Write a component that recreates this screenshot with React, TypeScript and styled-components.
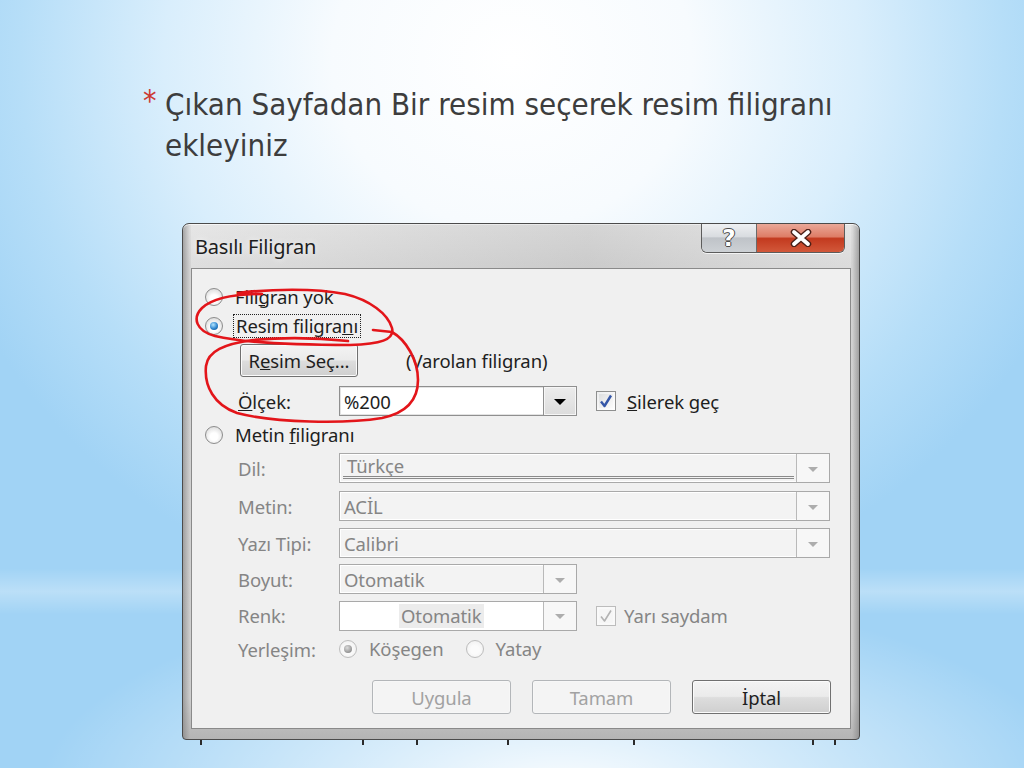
import styled, { createGlobalStyle } from 'styled-components';

const GlobalStyle = createGlobalStyle`
  html, body {
    margin: 0;
    padding: 0;
  }
  body {
    font-family: 'Noto Sans', 'Open Sans', sans-serif;
  }
  #root {
    width: 1024px;
    height: 768px;
  }
`;

const tickOffsets = [18, 160, 52, 89, 124, 177, 20];

const CloseGlyph = () => (
  <svg width="26" height="18" viewBox="0 0 26 18">
    <path d="M6 3 L20 15 M20 3 L6 15" stroke="#4a1f17" strokeWidth="6.5" strokeLinecap="round" fill="none" />
    <path d="M6 3 L20 15 M20 3 L6 15" stroke="#ffffff" strokeWidth="3.8" strokeLinecap="round" fill="none" />
  </svg>
);

const Check = ({ disabled }: { disabled?: boolean }) => (
  <svg width="16" height="16" viewBox="0 0 16 16">
    <path
      d="M3 8.5 L6.5 13 L13 2.5"
      stroke={disabled ? '#b3b3b3' : '#3557a8'}
      strokeWidth={disabled ? 1.6 : 2.4}
      fill="none"
      strokeLinejoin="round"
    />
  </svg>
);

const App = () => {
  return (
    <>
      <GlobalStyle />
      <Slide>
        <Heading>
          <Star>*</Star>
          <HeadingText>Çıkan Sayfadan Bir resim seçerek resim filigranı ekleyiniz</HeadingText>
        </Heading>

        <Dialog>
          <Window>
            <TitleBar>
              <Caption>Basılı Filigran</Caption>
              <CaptionButtons>
                <HelpButton>?</HelpButton>
                <CloseButton>
                  <CloseGlyph />
                </CloseButton>
              </CaptionButtons>
            </TitleBar>

            <Client>
              <Row $h={29}>
                <Radio />
                <OptionLabel>
                  Fili<u>g</u>ran yok
                </OptionLabel>
              </Row>
              <Row $h={29}>
                <Radio $checked />
                <OptionLabel $focused>
                  Resim filigra<u>n</u>ı
                </OptionLabel>
              </Row>
              <Row $h={41} $indent={35}>
                <PushButton $w={118} $h={33}>
                  R<u>e</u>sim Seç...
                </PushButton>
                <Note>(Varolan filigran)</Note>
              </Row>
              <Row $h={40} $indent={33}>
                <FieldLabel>
                  <u>Ö</u>lçek:
                </FieldLabel>
                <Combo $w={238} $enabled $white>
                  <ComboValue>%200</ComboValue>
                  <ComboButton $enabled>
                    <Arrow $enabled />
                  </ComboButton>
                </Combo>
                <CheckBox $gap={19}>
                  <Check />
                </CheckBox>
                <CheckLabel>
                  <u>S</u>ilerek geç
                </CheckLabel>
              </Row>
              <Row $h={28}>
                <Radio />
                <OptionLabel>
                  Metin <u>f</u>iligranı
                </OptionLabel>
              </Row>
              <Row $h={38} $indent={33}>
                <FieldLabel $disabled>Dil:</FieldLabel>
                <Combo $w={491}>
                  <ComboValue $disabled $ruled>
                    Türkçe
                  </ComboValue>
                  <ComboButton>
                    <Arrow />
                  </ComboButton>
                </Combo>
              </Row>
              <Row $h={38} $indent={33}>
                <FieldLabel $disabled>Metin:</FieldLabel>
                <Combo $w={491}>
                  <ComboValue $disabled>ACİL</ComboValue>
                  <ComboButton>
                    <Arrow />
                  </ComboButton>
                </Combo>
              </Row>
              <Row $h={36} $indent={33}>
                <FieldLabel $disabled>Yazı Tipi:</FieldLabel>
                <Combo $w={491}>
                  <ComboValue $disabled>Calibri</ComboValue>
                  <ComboButton>
                    <Arrow />
                  </ComboButton>
                </Combo>
              </Row>
              <Row $h={36} $indent={33}>
                <FieldLabel $disabled>Boyut:</FieldLabel>
                <Combo $w={238}>
                  <ComboValue $disabled>Otomatik</ComboValue>
                  <ComboButton>
                    <Arrow />
                  </ComboButton>
                </Combo>
              </Row>
              <Row $h={37} $indent={33}>
                <FieldLabel $disabled>Renk:</FieldLabel>
                <Combo $w={238} $white>
                  <ComboValue $disabled>
                    <Swatch>Otomatik</Swatch>
                  </ComboValue>
                  <ComboButton>
                    <Arrow />
                  </ComboButton>
                </Combo>
                <CheckBox $gap={19} $disabled>
                  <Check disabled />
                </CheckBox>
                <CheckLabel $disabled>Yarı saydam</CheckLabel>
              </Row>
              <Row $h={30} $indent={33}>
                <FieldLabel $disabled>Yerleşim:</FieldLabel>
                <Radio $checked $disabled />
                <OptionLabel $disabled>Köşegen</OptionLabel>
                <Radio $disabled $gap={22} />
                <OptionLabel $disabled>Yatay</OptionLabel>
              </Row>
              <ButtonBar>
                <PushButton $w={139} $h={34} $disabled>
                  Uygula
                </PushButton>
                <PushButton $w={139} $h={34} $disabled>
                  Tamam
                </PushButton>
                <PushButton $w={139} $h={34}>
                  İptal
                </PushButton>
              </ButtonBar>
            </Client>
          </Window>
          <Ticks>
            {tickOffsets.map((gap, i) => (
              <Tick key={i} $gap={gap} />
            ))}
          </Ticks>
        </Dialog>

        <Scribble viewBox="0 0 1024 768">
          <path d="M238 293 C270 289, 315 288, 345 294 C370 300, 388 314, 392 328 C395 340, 380 344, 350 345 C300 345, 245 343, 215 336 C196 331, 192 318, 202 308 C213 298, 232 294, 262 294" />
          <path d="M373 330 L392 332 C406 340, 418 360, 418 380 C418 400, 406 413, 382 418 C345 424, 275 423, 237 413 C214 405, 204 386, 206 366 C208 351, 224 344, 253 340 C285 337, 320 338, 348 341" />
        </Scribble>
      </Slide>
    </>
  );
};

export default App;

const Slide = styled.div`
  position: relative;
  width: 1024px;
  height: 768px;
  overflow: hidden;
  box-sizing: border-box;
  padding-top: 84px;
  background:
    radial-gradient(ellipse 520px 200px at 560px 790px, rgba(255, 255, 255, 0.95), rgba(255, 255, 255, 0) 100%),
    linear-gradient(to bottom, rgba(255, 255, 255, 0) 74%, rgba(255, 255, 255, 0.28) 77%, rgba(255, 255, 255, 0) 80%),
    radial-gradient(ellipse 600px 560px at 512px 60px, #ffffff 0%, #f7fbfe 30%, #d9eefc 58%, #b6def8 82%, #a1d3f5 100%);
`;

const Heading = styled.div`
  display: flex;
  align-items: flex-start;
  padding-left: 143px;
`;

const Star = styled.span`
  width: 22px;
  margin-top: 2px;
  font-family: 'DejaVu Sans Condensed', 'DejaVu Sans', sans-serif;
  font-size: 30px;
  line-height: 30px;
  color: #cc3a33;
`;

const HeadingText = styled.div`
  width: 700px;
  font-family: 'Liberation Sans Narrow', 'DejaVu Sans Condensed', 'Liberation Sans', sans-serif;
  font-stretch: condensed;
  font-size: 31px;
  letter-spacing: 0;
  line-height: 41px;
  color: #3d3d3d;
`;

const Dialog = styled.div`
  margin: 57px 0 0 182px;
  width: 678px;
`;

const Window = styled.div`
  box-sizing: border-box;
  border: 1px solid #4b4b4b;
  border-radius: 7px 7px 4px 4px;
  padding: 0 8px 10px;
  background:
    linear-gradient(to right, rgba(120, 120, 120, 0.55) 0px, rgba(120, 120, 120, 0) 7px, rgba(120, 120, 120, 0) calc(100% - 7px), rgba(120, 120, 120, 0.55) 100%),
    linear-gradient(to bottom, #dedede 0%, #d3d3d3 8%, #cdcdcd 92%, #b4b4b4 100%);
  box-shadow: inset 0 1px 0 #f4f4f4;
`;

const TitleBar = styled.div`
  height: 44px;
  display: flex;
  justify-content: space-between;
  align-items: flex-start;
  background: linear-gradient(to right, rgba(255, 255, 255, 0.25), rgba(160, 160, 160, 0.15) 60%, rgba(255, 255, 255, 0.2));
`;

const Caption = styled.div`
  margin: 11px 0 0 4px;
  font-family: 'Noto Sans', 'Open Sans', sans-serif;
  font-size: 20px;
  line-height: 24px;
  letter-spacing: -0.2px;
  color: #1d1d1d;
  text-shadow: 0 0 6px rgba(255, 255, 255, 0.9);
`;

const CaptionButtons = styled.div`
  display: flex;
  margin-right: 6px;
  height: 28px;
  border: 1px solid #5c5c5c;
  border-top: none;
  border-radius: 0 0 6px 6px;
  overflow: hidden;
  box-shadow: 0 1px 0 rgba(255, 255, 255, 0.7);
`;

const HelpButton = styled.div`
  width: 54px;
  display: flex;
  align-items: center;
  justify-content: center;
  border-right: 1px solid #6a6a6a;
  background: linear-gradient(to bottom, #eef0f2 0%, #d9dce0 45%, #bfc3c8 50%, #cdd1d5 100%);
  font-family: 'DejaVu Sans', sans-serif;
  font-weight: 700;
  font-size: 23px;
  line-height: 26px;
  color: #ffffff;
  text-shadow: 1px 0 0 #4a4a4a, -1px 0 0 #4a4a4a, 0 1px 0 #4a4a4a, 0 -1px 0 #4a4a4a;
`;

const CloseButton = styled.div`
  width: 87px;
  display: flex;
  align-items: center;
  justify-content: center;
  background: linear-gradient(to bottom, #eaa898 0%, #de7d67 45%, #c33a1f 52%, #d2583a 100%);
`;

const Client = styled.div`
  box-sizing: border-box;
  height: 461px;
  border: 1px solid #8a8a8a;
  background: #f0f0f0;
  padding: 13px 19px 0 13px;
  font-family: 'Noto Sans', 'Open Sans', sans-serif;
  font-size: 18.5px;
  letter-spacing: -0.1px;
  color: #1e1e1e;
`;

const Row = styled.div<{ $h: number; $indent?: number }>`
  height: ${(p) => p.$h}px;
  display: flex;
  align-items: center;
  padding-left: ${(p) => p.$indent ?? 0}px;
`;

const Radio = styled.span<{ $checked?: boolean; $disabled?: boolean; $gap?: number }>`
  flex-shrink: 0;
  width: 18px;
  height: 18px;
  margin-left: ${(p) => p.$gap ?? 0}px;
  box-sizing: border-box;
  border-radius: 50%;
  border: 1px solid ${(p) => (p.$disabled ? '#bdbdbd' : '#8c8c8c')};
  background: ${(p) =>
    p.$disabled
      ? 'radial-gradient(circle at 50% 55%, #fbfbfb 35%, #ececec 100%)'
      : 'radial-gradient(circle at 50% 60%, #ffffff 30%, #e3e3e3 70%, #cdcdcd 100%)'};
  display: inline-flex;
  align-items: center;
  justify-content: center;

  &::after {
    content: '';
    display: ${(p) => (p.$checked ? 'block' : 'none')};
    width: 8px;
    height: 8px;
    border-radius: 50%;
    background: ${(p) =>
      p.$disabled
        ? 'radial-gradient(circle at 40% 35%, #dcdcdc, #8a8a8a 80%)'
        : 'radial-gradient(circle at 40% 35%, #b5e6ff, #2f86cf 55%, #10467c 100%)'};
  }
`;

const OptionLabel = styled.span<{ $focused?: boolean; $disabled?: boolean }>`
  margin-left: ${(p) => (p.$focused ? 10 : 12)}px;
  padding: ${(p) => (p.$focused ? '0 2px' : '0')};
  border: ${(p) => (p.$focused ? '1px dotted #222' : 'none')};
  line-height: 22px;
  white-space: nowrap;
  color: ${(p) => (p.$disabled ? '#858585' : '#1e1e1e')};
`;

const FieldLabel = styled.span<{ $disabled?: boolean }>`
  width: 101px;
  flex-shrink: 0;
  white-space: nowrap;
  color: ${(p) => (p.$disabled ? '#858585' : '#1e1e1e')};
`;

const Note = styled.span`
  margin-left: 48px;
  white-space: nowrap;
`;

const PushButton = styled.div<{ $w: number; $h: number; $disabled?: boolean }>`
  width: ${(p) => p.$w}px;
  height: ${(p) => p.$h}px;
  box-sizing: border-box;
  display: flex;
  align-items: center;
  justify-content: center;
  border-radius: 3px;
  border: 1px solid ${(p) => (p.$disabled ? '#b3b6b9' : '#707070')};
  background: ${(p) =>
    p.$disabled
      ? '#f4f4f4'
      : 'linear-gradient(to bottom, #f3f3f3 0%, #ebebeb 48%, #dddddd 52%, #cfcfcf 100%)'};
  box-shadow: inset 0 0 0 1px ${(p) => (p.$disabled ? '#f7f7f7' : '#fbfbfb')};
  color: ${(p) => (p.$disabled ? '#a2a2a2' : '#1e1e1e')};
  white-space: nowrap;
`;

const Combo = styled.div<{ $w: number; $enabled?: boolean; $white?: boolean }>`
  width: ${(p) => p.$w}px;
  height: 30px;
  flex-shrink: 0;
  box-sizing: border-box;
  display: flex;
  border: 1px solid ${(p) => (p.$enabled ? '#8f8f8f' : '#a9a9a9')};
  box-shadow: inset 0 0 0 1px ${(p) => (p.$enabled ? '#e3e3e3' : '#ffffff')};
  background: ${(p) => (p.$white ? '#ffffff' : '#f3f3f3')};
`;

const ComboValue = styled.div<{ $disabled?: boolean; $ruled?: boolean }>`
  flex: 1;
  display: flex;
  align-items: center;
  padding-left: 4px;
  margin: ${(p) => (p.$ruled ? '1px 2px 3px 3px' : '0')};
  border-bottom: ${(p) => (p.$ruled ? '3px double #8a8a8a' : 'none')};
  color: ${(p) => (p.$disabled ? '#858585' : '#1e1e1e')};
  white-space: nowrap;
`;

const Swatch = styled.span`
  margin-left: 55px;
  padding: 0 2px;
  background: #ececec;
  line-height: 24px;
`;

const ComboButton = styled.div<{ $enabled?: boolean }>`
  width: 33px;
  box-sizing: border-box;
  display: flex;
  align-items: center;
  justify-content: center;
  border-left: 1px solid ${(p) => (p.$enabled ? '#8f8f8f' : '#b9b9b9')};
  background: ${(p) =>
    p.$enabled ? 'linear-gradient(to bottom, #ececec, #dcdcdc)' : '#f7f7f7'};
  box-shadow: ${(p) => (p.$enabled ? 'inset 0 0 0 1px #f6f6f6' : 'none')};
`;

const Arrow = styled.span<{ $enabled?: boolean }>`
  width: 0;
  height: 0;
  border-left: ${(p) => (p.$enabled ? 6 : 5)}px solid transparent;
  border-right: ${(p) => (p.$enabled ? 6 : 5)}px solid transparent;
  border-top: ${(p) => (p.$enabled ? 6 : 5)}px solid ${(p) => (p.$enabled ? '#000000' : '#adadad')};
  margin-top: 2px;
`;

const CheckBox = styled.span<{ $gap: number; $disabled?: boolean }>`
  flex-shrink: 0;
  width: 20px;
  height: 20px;
  margin-left: ${(p) => p.$gap}px;
  box-sizing: border-box;
  display: inline-flex;
  align-items: center;
  justify-content: center;
  border: 1px solid ${(p) => (p.$disabled ? '#bcbcbc' : '#8e8f8f')};
  background: ${(p) =>
    p.$disabled ? '#f6f6f6' : 'linear-gradient(135deg, #d8dadc 0%, #f2f2f2 60%, #ffffff 100%)'};
  box-shadow: inset 0 0 0 2px ${(p) => (p.$disabled ? '#f9f9f9' : 'rgba(255,255,255,0.5)')};
`;

const CheckLabel = styled.span<{ $disabled?: boolean }>`
  margin-left: ${(p) => (p.$disabled ? 8 : 11)}px;
  white-space: nowrap;
  color: ${(p) => (p.$disabled ? '#858585' : '#1e1e1e')};
`;

const ButtonBar = styled.div`
  margin-top: 16px;
  display: flex;
  justify-content: flex-end;
  gap: 21px;
`;

const Ticks = styled.div`
  display: flex;
  height: 5px;
`;

const Tick = styled.span<{ $gap: number }>`
  width: 2px;
  height: 5px;
  margin-left: ${(p) => p.$gap}px;
  background: #2b2b2b;
`;

const Scribble = styled.svg`
  position: absolute;
  left: 0;
  top: 0;
  width: 1024px;
  height: 768px;
  pointer-events: none;

  path {
    fill: none;
    stroke: #e3151a;
    stroke-width: 2.6;
    stroke-linecap: round;
    stroke-linejoin: round;
  }
`;
